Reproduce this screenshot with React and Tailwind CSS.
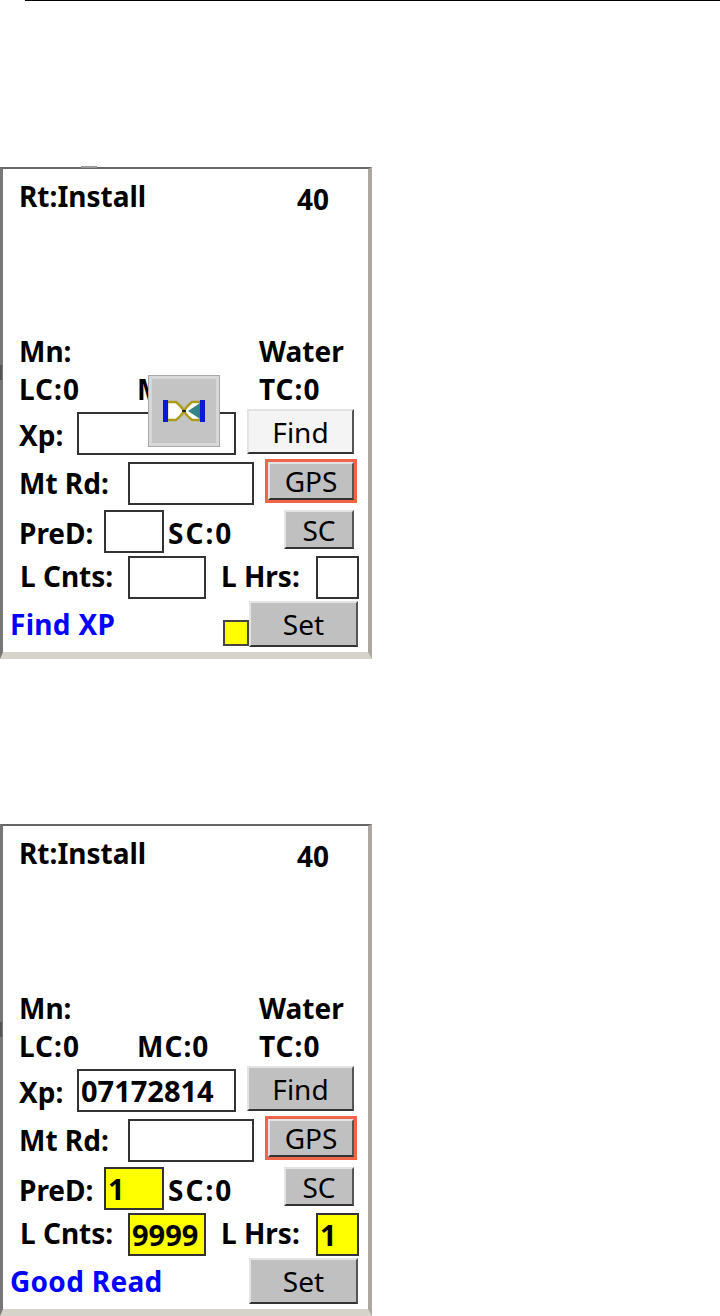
const font = { fontFamily: '"Noto Sans", sans-serif' };

function Label({ w, className = '', children }) {
  return <span className={`shrink-0 whitespace-nowrap font-bold text-[28px] leading-none text-black ${w} ${className}`}>{children}</span>;
}

function Field({ className = '', children }) {
  return (
    <div className={`shrink-0 flex items-center h-[43px] border-2 border-[#333] font-bold text-[29px] leading-none text-black pl-[2px] ${className}`}>
      {children}
    </div>
  );
}

function Btn({ className = '', children }) {
  return (
    <div className={`shrink-0 flex items-center justify-center border-2 border-t-[#e4e4e4] border-l-[#e4e4e4] border-r-[#555] border-b-[#333] text-[28px] leading-none text-black ${className}`}>
      {children}
    </div>
  );
}

function Hourglass() {
  return (
    <svg width="42" height="22" viewBox="0 0 42 22">
      <path d="M4 2 H13 Q19 7 21 11 Q23 7 29 2 H38 V20 H29 Q23 15 21 11 Q19 15 13 20 H4 Z" fill="#fff" stroke="#a89c18" strokeWidth="2.5" />
      <path d="M25 11 L37 3 V19 Z" fill="#0f6f6f" opacity="0.85" />
      <path d="M19 11 H23" stroke="#222" strokeWidth="2" />
      <rect x="0" y="0" width="5" height="22" fill="#0a18d8" />
      <rect x="37" y="0" width="5" height="22" fill="#0a18d8" />
    </svg>
  );
}

function Screen({ mc, busy, xp, pred, cnts, hrs, status, tick }) {
  const yellow = pred ? 'bg-[#ffff00]' : 'bg-white';
  return (
    <div className="relative w-[372px] h-[492px] shrink-0 bg-white border-t-[2px] border-t-[#666] border-l-[3px] border-l-[#777] border-r-[4px] border-r-[#aaa8a0] border-b-[7px] border-b-[#d6d3cb]" style={font}>
      {/* top row */}
      <div className="flex items-start h-[167px] pt-[13px]">
        <Label w="w-[278px]" className="ml-[16px]">Rt:Install</Label>
        <Label className="mt-[3px]">40</Label>
      </div>

      {/* meter name */}
      <div className="flex items-start h-[37px]">
        <Label w="w-[240px]" className="ml-[16px] mt-[1px]">Mn:</Label>
        <Label className="mt-[1px]">Water</Label>
      </div>
      <div className="flex items-start h-[36px] pt-[2px]">
        <Label w="w-[118px]" className="ml-[16px] tracking-[1px]">LC:0</Label>
        <Label w="w-[122px]" className="tracking-[1px]">{mc}</Label>
        <Label className="tracking-[1px]">TC:0</Label>
      </div>

      {/* inputs */}
      <div className="flex items-start h-[50px]">
        <Label w="w-[58px]" className="ml-[16px] mt-[12px]">Xp:</Label>
        <Field className="w-[159px] mt-[3px] bg-white">{xp}</Field>
        <Btn className={`w-[107px] h-[45px] ml-[11px] ${busy ? 'bg-[#f4f4f4]' : 'bg-[#c0c0c0]'}`}>Find</Btn>
      </div>
      <div className="flex items-start h-[51px]">
        <Label w="w-[109px]" className="ml-[16px] mt-[10px]">Mt Rd:</Label>
        <Field className="w-[126px] mt-[3px] bg-white" />
        <div className="ml-[11px] p-[3px] bg-[#f0664a]">
          <Btn className="w-[86px] h-[38px] bg-[#c0c0c0]">GPS</Btn>
        </div>
      </div>
      <div className="flex items-start h-[46px]">
        <Label w="w-[85px]" className="ml-[16px] mt-[9px]">PreD:</Label>
        <Field className={`w-[60px] ${yellow}`}>{pred}</Field>
        <Label w="w-[116px]" className="ml-[4px] mt-[9px] tracking-[2px]">SC:0</Label>
        <Btn className="w-[70px] h-[39px] bg-[#c0c0c0]">SC</Btn>
      </div>
      <div className="flex items-start h-[45px]">
        <Label w="w-[108px]" className="ml-[17px] mt-[6px]">L Cnts:</Label>
        <Field className={`w-[78px] ${yellow}`}>{cnts}</Field>
        <Label w="w-[95px]" className="ml-[15px] mt-[6px]">L Hrs:</Label>
        <Field className={`w-[43px] ${yellow}`}>{hrs}</Field>
      </div>

      {/* status */}
      <div className="flex items-center h-[46px]">
        <Label w="w-[213px]" className="ml-[7px] tracking-[0.3px] !text-[#0000ff]">{status}</Label>
        {busy
          ? <div className="w-[26px] h-[26px] mt-[18px] shrink-0 bg-[#ffff00] border-2 border-[#444]" />
          : <div className="w-[26px] shrink-0" />}
        <Btn className="w-[109px] h-[46px] bg-[#c0c0c0]">Set</Btn>
      </div>

      {busy && (
        <div className="absolute left-[146px] top-[207px] w-[70px] h-[70px] flex items-center justify-center bg-[#c4c4c4] border-[3px] border-[#d8d8d8] outline-1 outline-[#aaa]">
          <Hourglass />
        </div>
      )}
      {tick && <div className="absolute left-[78px] -top-[3px] w-[16px] h-[2px] bg-[#999]" />}
      <div className="absolute -left-[3px] top-[196px] w-[2px] h-[15px] bg-[#555]" />
    </div>
  );
}

export default function App() {
  return (
    <div className="w-[720px] h-[1316px] overflow-hidden bg-white flex flex-col">
      <div className="ml-[25px] h-px bg-black shrink-0" />
      <div className="mt-[166px]">
        <Screen mc="MC:0" busy tick status="Find XP" />
      </div>
      <div className="mt-[165px]">
        <Screen mc="MC:0" xp="07172814" pred="1" cnts="9999" hrs="1" status="Good Read" />
      </div>
    </div>
  );
}
